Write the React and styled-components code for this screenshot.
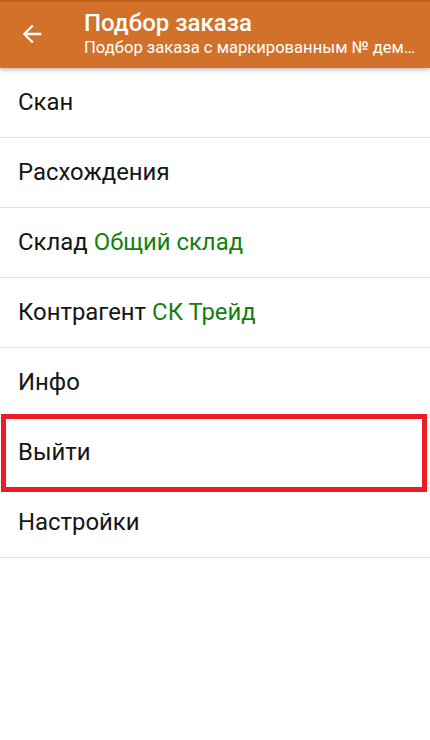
import styled, { createGlobalStyle } from "styled-components";

const GlobalStyle = createGlobalStyle`
  html, body {
    margin: 0;
    padding: 0;
    background: #ffffff;
    font-family: Roboto, "Noto Sans", sans-serif;
  }
`;

const Screen = styled.div`
  width: 430px;
  height: 740px;
  background: #ffffff;
  overflow: hidden;
`;

const Toolbar = styled.header`
  position: relative;
  z-index: 1;
  box-sizing: border-box;
  height: 68px;
  background: #d1712a;
  border-top: 2px solid #bf5f1c;
  display: flex;
  align-items: center;
  box-shadow: 0 2px 4px rgba(0, 0, 0, 0.25);
`;

const BackButton = styled.button`
  width: 64px;
  height: 100%;
  flex: none;
  border: 0;
  background: none;
  padding: 0;
  display: flex;
  align-items: center;
  justify-content: center;
  margin-right: 20px;
  margin-top: -2px;
`;

const Titles = styled.div`
  min-width: 0;
  flex: 1;
  padding-right: 10px;
  color: #ffffff;
  margin-top: -4px;
`;

const Title = styled.h1`
  margin: 0;
  font-size: 24px;
  font-weight: 500;
  line-height: 28px;
`;

const Subtitle = styled.p`
  margin: 0;
  font-size: 16.6px;
  line-height: 21px;
  white-space: nowrap;
  overflow: hidden;
  text-overflow: ellipsis;
`;

const Menu = styled.ul`
  list-style: none;
  margin: 0;
  padding: 0;
`;

const Item = styled.li`
  position: relative;
  box-sizing: content-box;
  height: 68px;
  padding-bottom: 1px;
  padding-left: 18px;
  border-bottom: 1px solid #e2e2e2;
  display: flex;
  align-items: center;
  font-size: 23.9px;
  color: #151515;

  ${(p) =>
    p.$highlight &&
    `
    &::after {
      content: "";
      position: absolute;
      left: 1px;
      right: 3px;
      top: -4px;
      bottom: -5px;
      border: 5px solid #ed1c24;
    }
  `}
`;

const Value = styled.span`
  color: #13800f;
  margin-left: 6px;
`;

const items = [
  { label: "Скан" },
  { label: "Расхождения" },
  { label: "Склад", value: "Общий склад" },
  { label: "Контрагент", value: "СК Трейд" },
  { label: "Инфо" },
  { label: "Выйти", highlight: true },
  { label: "Настройки" },
];

export default function App() {
  return (
    <Screen>
      <GlobalStyle />
      <Toolbar>
        <BackButton aria-label="Назад">
          <svg width="28" height="28" viewBox="0 0 24 24">
            <path
              d="M20 11H7.83l5.59-5.59L12 4l-8 8 8 8 1.41-1.41L7.83 13H20v-2z"
              fill="#ffffff"
            />
          </svg>
        </BackButton>
        <Titles>
          <Title>Подбор заказа</Title>
          <Subtitle>Подбор заказа с маркированным № демонстрационный</Subtitle>
        </Titles>
      </Toolbar>
      <Menu>
        {items.map((it) => (
          <Item key={it.label} $highlight={it.highlight}>
            {it.label}
            {it.value && <Value>{it.value}</Value>}
          </Item>
        ))}
      </Menu>
    </Screen>
  );
}
